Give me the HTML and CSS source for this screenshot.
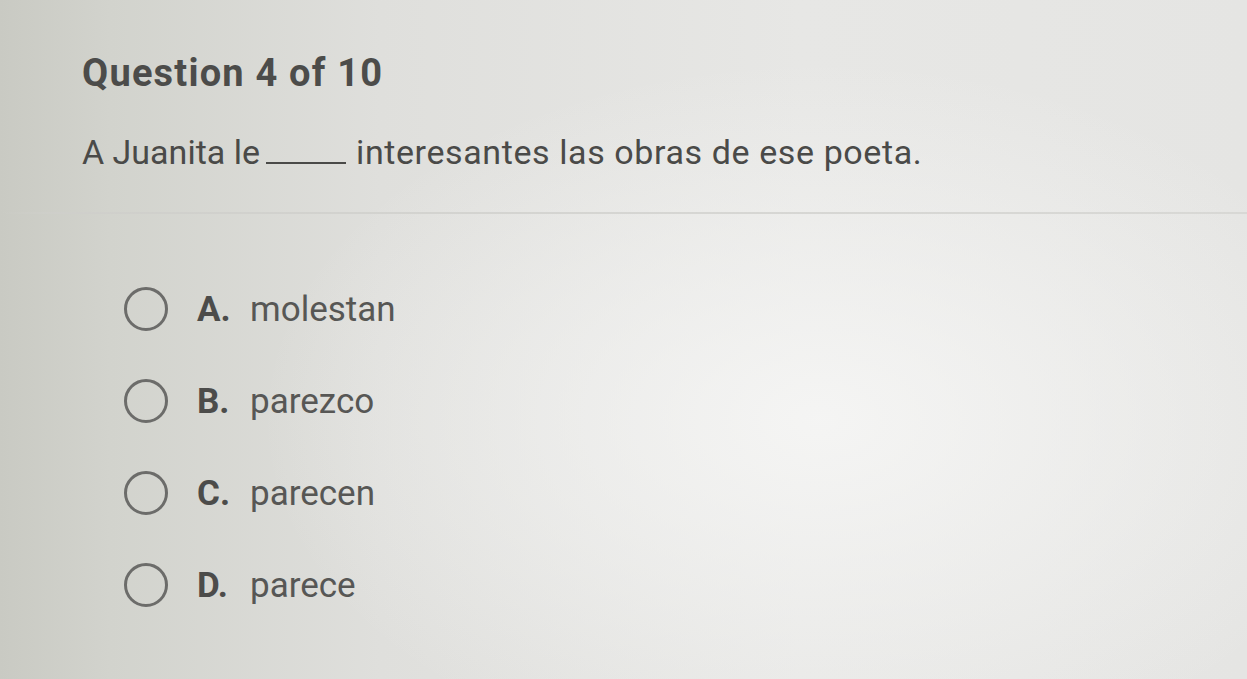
FILE: index.html
```html
<!DOCTYPE html>
<html lang="es">
<head>
<meta charset="utf-8">
<link rel="stylesheet" href="styles.css">
</head>
<body>
<div class="page">
  <header class="head">
    <h1 class="title">Question 4 of 10</h1>
    <p class="prompt"><span class="lead">A Juanita le</span><span class="blank"></span><span class="rest">interesantes las obras de ese poeta.</span></p>
  </header>
  <hr class="divider">
  <ul class="options">
    <li class="option"><span class="radio"></span><span class="letter">A.</span><span class="answer">molestan</span></li>
    <li class="option"><span class="radio"></span><span class="letter">B.</span><span class="answer">parezco</span></li>
    <li class="option"><span class="radio"></span><span class="letter">C.</span><span class="answer">parecen</span></li>
    <li class="option"><span class="radio"></span><span class="letter">D.</span><span class="answer">parece</span></li>
  </ul>
</div>
</body>
</html>
```

FILE: styles.css
```css
html, body {
  margin: 0;
  padding: 0;
}
body {
  width: 1247px;
  height: 679px;
  overflow: hidden;
  font-family: Roboto, "Liberation Sans", Arial, sans-serif;
  color: #4d4d4b;
  background:
    radial-gradient(ellipse 560px 360px at 820px 420px, rgba(246,246,245,0.9), rgba(246,246,245,0) 100%),
    linear-gradient(90deg, #c9cac3 0px, #d2d3cd 110px, #dfdfdc 380px, #e7e7e5 800px, #e5e5e3 1247px);
}
.page {
  padding: 50px 0 0 0;
}
.head {
  padding-left: 82px;
}
.title {
  margin: 0;
  font-size: 38px;
  font-weight: 700;
  letter-spacing: 1.2px;
  line-height: 46px;
  color: #4c4c4a;
}
.prompt {
  margin: 36px 0 0 0;
  font-size: 34px;
  line-height: 40px;
  font-weight: 400;
  color: #4a4a48;
  white-space: nowrap;
}
.lead {
  letter-spacing: 0;
}
.rest {
  letter-spacing: 0.6px;
}
.blank {
  display: inline-block;
  width: 80px;
  margin: 0 10px 0 6px;
  border-bottom: 2px solid #4a4a48;
  vertical-align: baseline;
}
.divider {
  margin: 40px 0 0 0;
  border: 0;
  height: 2px;
  background: linear-gradient(90deg, rgba(200,200,196,0) 0px, #cfcfcb 80px, #d6d6d3 700px, #d8d8d5 1247px);
}
.options {
  list-style: none;
  margin: 0;
  padding: 73px 0 0 124px;
  display: flex;
  flex-direction: column;
  gap: 48px;
}
.option {
  display: flex;
  align-items: center;
  height: 44px;
  font-size: 35px;
}
.radio {
  width: 38px;
  height: 38px;
  border: 3px solid #6c6c6a;
  border-radius: 50%;
  box-sizing: content-box;
  flex: none;
}
.letter {
  margin-left: 29px;
  font-weight: 700;
  width: 53px;
  color: #4c4c4a;
}
.answer {
  color: #575755;
}
```
